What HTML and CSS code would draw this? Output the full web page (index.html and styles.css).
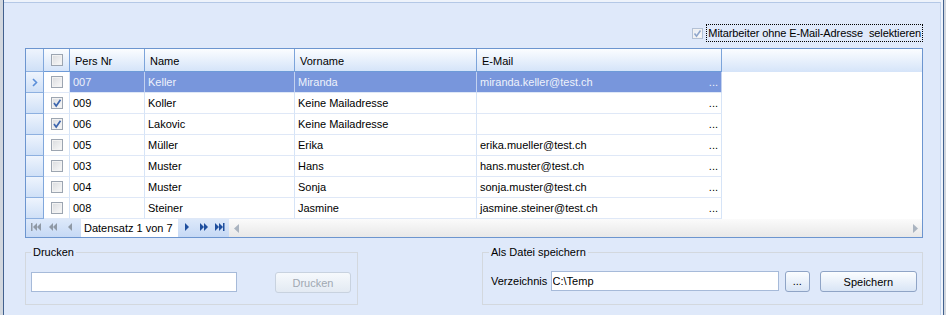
FILE: index.html
```html
<!DOCTYPE html>
<html lang="de">
<head>
    <meta charset="UTF-8">
    <title>Mitarbeiter E-Mail Export</title>
    <link rel="stylesheet" href="styles.css">
</head>
<body>
    <div class="window">
        <div class="outside-left"></div>
        <div class="panel">
            <div class="form">
                <div class="option-row">
                    <span class="check check-soft"><svg width="9" height="9" viewBox="0 0 9 9"><polyline points="1.5,4.5 3.5,7.2 7.5,1.5" fill="none" stroke="#8fa6cb" stroke-width="1.6"/></svg></span>
                    <span class="option-label">Mitarbeiter ohne E-Mail-Adresse  selektieren</span>
                </div>

                <div class="grid">
                    <div class="row head">
                        <div class="cell ind"></div>
                        <div class="cell chk"><span class="check"></span></div>
                        <div class="cell">Pers Nr</div>
                        <div class="cell">Name</div>
                        <div class="cell">Vorname</div>
                        <div class="cell">E-Mail</div>
                        <div class="cell fill"></div>
                    </div>
                    <div class="row sel">
                        <div class="cell ind"><svg width="6" height="9" viewBox="0 0 6 9"><polyline points="1,1 4.5,4.5 1,8" fill="none" stroke="#5b8fd9" stroke-width="1.6"/></svg></div>
                        <div class="cell chk"><span class="check"></span></div>
                        <div class="cell">007</div>
                        <div class="cell">Keller</div>
                        <div class="cell">Miranda</div>
                        <div class="cell mail"><span>miranda.keller@test.ch</span><span>...</span></div>
                        <div class="cell fill"></div>
                    </div>
                    <div class="row">
                        <div class="cell ind"></div>
                        <div class="cell chk"><span class="check"><svg width="10" height="10" viewBox="0 0 10 10"><polyline points="2,5 4.2,8 8.5,1.8" fill="none" stroke="#3d66ae" stroke-width="1.7"/></svg></span></div>
                        <div class="cell">009</div>
                        <div class="cell">Koller</div>
                        <div class="cell">Keine Mailadresse</div>
                        <div class="cell mail"><span></span><span>...</span></div>
                        <div class="cell fill"></div>
                    </div>
                    <div class="row">
                        <div class="cell ind"></div>
                        <div class="cell chk"><span class="check"><svg width="10" height="10" viewBox="0 0 10 10"><polyline points="2,5 4.2,8 8.5,1.8" fill="none" stroke="#3d66ae" stroke-width="1.7"/></svg></span></div>
                        <div class="cell">006</div>
                        <div class="cell">Lakovic</div>
                        <div class="cell">Keine Mailadresse</div>
                        <div class="cell mail"><span></span><span>...</span></div>
                        <div class="cell fill"></div>
                    </div>
                    <div class="row">
                        <div class="cell ind"></div>
                        <div class="cell chk"><span class="check"></span></div>
                        <div class="cell">005</div>
                        <div class="cell">Müller</div>
                        <div class="cell">Erika</div>
                        <div class="cell mail"><span>erika.mueller@test.ch</span><span>...</span></div>
                        <div class="cell fill"></div>
                    </div>
                    <div class="row">
                        <div class="cell ind"></div>
                        <div class="cell chk"><span class="check"></span></div>
                        <div class="cell">003</div>
                        <div class="cell">Muster</div>
                        <div class="cell">Hans</div>
                        <div class="cell mail"><span>hans.muster@test.ch</span><span>...</span></div>
                        <div class="cell fill"></div>
                    </div>
                    <div class="row">
                        <div class="cell ind"></div>
                        <div class="cell chk"><span class="check"></span></div>
                        <div class="cell">004</div>
                        <div class="cell">Muster</div>
                        <div class="cell">Sonja</div>
                        <div class="cell mail"><span>sonja.muster@test.ch</span><span>...</span></div>
                        <div class="cell fill"></div>
                    </div>
                    <div class="row">
                        <div class="cell ind"></div>
                        <div class="cell chk"><span class="check"></span></div>
                        <div class="cell">008</div>
                        <div class="cell">Steiner</div>
                        <div class="cell">Jasmine</div>
                        <div class="cell mail"><span>jasmine.steiner@test.ch</span><span>...</span></div>
                        <div class="cell fill"></div>
                    </div>

                    <!-- record navigator -->
                    <div class="navigator">
                        <div class="nav-btns nav-left">
                            <svg width="55" height="18" viewBox="0 0 55 18" fill="#8f99a5">
                                <rect x="5" y="4" width="1.5" height="8"/>
                                <polygon points="7,8 11,4 11,12"/>
                                <polygon points="11,8 15,4 15,12"/>
                                <polygon points="23,8 27,4 27,12"/>
                                <polygon points="27,8 31,4 31,12"/>
                                <polygon points="42,8 46,4 46,12"/>
                            </svg>
                        </div>
                        <div class="nav-text">Datensatz 1 von 7</div>
                        <div class="nav-btns nav-right">
                            <svg width="51" height="18" viewBox="0 0 51 18" fill="#1f4f9e">
                                <polygon points="7,4 7,12 11,8"/>
                                <polygon points="22,4 22,12 26,8"/>
                                <polygon points="26,4 26,12 30,8"/>
                                <polygon points="37,4 37,12 41,8"/>
                                <polygon points="41,4 41,12 45,8"/>
                                <rect x="45" y="4" width="1.5" height="8"/>
                            </svg>
                        </div>
                        <div class="hscroll">
                            <svg width="5" height="9" viewBox="0 0 5 9"><polygon points="0,4.5 5,0 5,9" fill="#aab4c0"/></svg>
                            <svg width="5" height="9" viewBox="0 0 5 9"><polygon points="0,0 5,4.5 0,9" fill="#aab4c0"/></svg>
                        </div>
                    </div>
                </div>

                <div class="groups">
                    <fieldset class="group print">
                        <legend>Drucken</legend>
                        <div class="field-row">
                            <input type="text" class="text-input print-input">
                            <button class="btn print-btn" disabled>Drucken</button>
                        </div>
                    </fieldset>
                    <fieldset class="group save">
                        <legend>Als Datei speichern</legend>
                        <div class="field-row">
                            <label class="dir-label">Verzeichnis</label>
                            <input type="text" class="text-input dir-input" value="C:\Temp">
                            <button class="btn browse-btn">...</button>
                            <button class="btn save-btn">Speichern</button>
                        </div>
                    </fieldset>
                </div>
            </div>
        </div>
        <div class="outside-right"></div>
    </div>
</body>
</html>
```

FILE: styles.css
```css
body {
    margin: 0;
    font-family: "Liberation Sans", Arial, sans-serif;
    font-size: 11px;
    color: #000;
    background: #dfe9fa;
}

/* window frame */
.window {
    display: flex;
    width: 946px;
    height: 315px;
    overflow: hidden;
}

.outside-left {
    width: 3px;
    background: #d2d7de;
}

.outside-right {
    width: 2px;
    background: #d2d7de;
}

.panel {
    flex: 1;
    display: flex;
    flex-direction: column;
    border-left: 1px solid #42618e;
    border-right: 1px solid #42618e;
    padding-top: 2px;
    background: #eef3fb;
}

.form {
    flex: 1;
    background: #dfe9fa;
    border-top: 1px solid #b4c8e6;
    border-right: 1px solid #c0d2ec;
    margin-right: 2px;
    padding: 0 17px 0 21px;
}

/* option checkbox */
.option-row {
    display: flex;
    justify-content: flex-end;
    align-items: center;
    height: 18px;
    margin-top: 21px;
    margin-bottom: 6px;
}

.option-label {
    border: 1px dotted #000;
    padding: 0 1px;
    line-height: 16px;
    white-space: pre;
    margin-left: 3px;
    letter-spacing: -0.1px;
}

.check {
    display: inline-flex;
    align-items: center;
    justify-content: center;
    width: 12px;
    height: 12px;
    box-sizing: border-box;
    border: 1px solid #9ca5b1;
    background: linear-gradient(135deg, #d9dbde, #fafafa);
    box-shadow: inset 0 0 0 1px #f2f2f2;
}

.check-soft {
    width: 11px;
    height: 11px;
    border-color: #b3c1d5;
    background: linear-gradient(135deg, #e6ebf2, #fbfcfe);
}

/* data grid */
.grid {
    border: 1px solid #6c95cf;
    background: #fff;
}

.row {
    display: grid;
    grid-template-columns: 18px 26px 75px 150px 182px 245px 1fr;
    height: 21px;
}

.row.head {
    height: 23px;
}

.cell {
    box-sizing: border-box;
    border-right: 1px solid #d6e4f7;
    border-bottom: 1px solid #dfe8f7;
    padding: 1px 0 0 3px;
    line-height: 19px;
    white-space: nowrap;
    overflow: hidden;
}

.head .cell {
    background: linear-gradient(#fbfdff, #d5e4f9);
    border-right-color: #7ca4da;
    border-bottom-color: #6d9bd8;
    padding-top: 2px;
    line-height: 20px;
    padding-left: 5px;
}

.head .fill {
    border-right: none;
}

.cell.ind {
    padding: 0;
    display: flex;
    align-items: center;
    justify-content: center;
    background: linear-gradient(#eef4fd, #cfe0f7);
    border-right-color: #80a7dc;
    border-bottom-color: #8db0e0;
}

.cell.chk {
    padding: 0;
    display: flex;
    align-items: center;
    justify-content: center;
}

.cell.fill {
    border: none;
}

.cell.mail {
    display: flex;
    justify-content: space-between;
    padding-right: 3px;
}

.row.sel .cell:not(.ind):not(.chk):not(.fill) {
    background: #7896dc;
    color: #eef2fb;
    border-right-color: #c3d2f0;
}

/* record navigator */
.navigator {
    display: flex;
    height: 18px;
}

.nav-btns {
    background: linear-gradient(#dde9fa, #c6d9f5);
}

.nav-left {
    width: 55px;
}

.nav-right {
    width: 51px;
}

.nav-btns svg {
    display: block;
}

.nav-text {
    width: 97px;
    box-sizing: border-box;
    padding-left: 3px;
    line-height: 18px;
    background: #fff;
}

.hscroll {
    flex: 1;
    display: flex;
    justify-content: space-between;
    align-items: center;
    padding: 0 4px 0 5px;
    background: linear-gradient(#fbfbfb, #e8e8e8);
}

/* bottom group boxes */
.groups {
    display: flex;
    justify-content: space-between;
    margin-top: 8px;
}

.group {
    margin: 0;
    box-sizing: border-box;
    height: 59px;
    min-width: 0;
    border: 1px solid #d3d8de;
    padding: 0 5px;
}

.group legend {
    padding: 0 2px;
    line-height: 13px;
}

.print {
    width: 333px;
}

.save {
    width: 441px;
    padding-left: 8px;
}

.save legend {
    margin-left: -2px;
}

.field-row {
    display: flex;
    align-items: center;
    margin-top: 11px;
}

.text-input {
    box-sizing: border-box;
    height: 20px;
    border: 1px solid #a6bad9;
    background: #fff;
    font: inherit;
    padding: 0 1px;
    margin: 0;
    outline: none;
}

.print-input {
    width: 206px;
    margin-top: 1px;
}

.dir-label {
    width: 60px;
}

.dir-input {
    width: 230px;
}

.btn {
    box-sizing: border-box;
    height: 21px;
    margin: 0;
    padding: 0;
    border: 1px solid #8fa4c6;
    border-radius: 3px;
    background: linear-gradient(#fbfdff, #eaf1fa 50%, #d9e5f5);
    font: inherit;
    color: #000;
}

.print-btn {
    width: 76px;
    margin-left: 38px;
    margin-top: 2px;
    border-color: #c8d2df;
    color: #a0a8b2;
    background: linear-gradient(#f6f9fc, #e3eaf3);
}

.browse-btn {
    width: 25px;
    margin-left: 6px;
}

.save-btn {
    width: 98px;
    margin-left: 10px;
    margin-top: 1px;
}
```
